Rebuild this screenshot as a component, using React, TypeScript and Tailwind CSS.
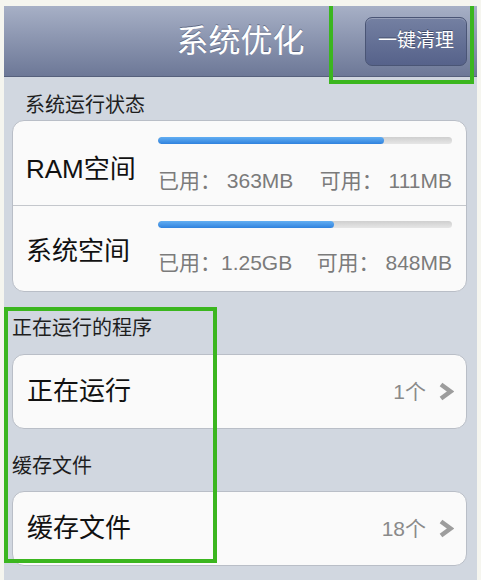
import type { ReactNode } from "react";

const font = "font-['Liberation_Sans','Noto_Sans_CJK_SC',sans-serif]";

function Bar({ pct }: { pct: number }) {
  return (
    <div className="h-[7px] w-full rounded-full bg-gradient-to-b from-[#cfcfcf] to-[#e6e6e6] overflow-hidden">
      <div
        className="h-full rounded-full bg-gradient-to-b from-[#62aef2] to-[#2f82de]"
        style={{ width: `${pct}%` }}
      />
    </div>
  );
}

function StatRow({
  label,
  pct,
  used,
  free,
  pad,
  gap,
  shift,
}: {
  label: string;
  pct: number;
  used: string;
  free: string;
  pad: string;
  gap: string;
  shift: string;
}) {
  return (
    <div className="flex items-center">
      <div className={`w-[145px] shrink-0 pl-[13px] text-[26px] leading-[30px] text-[#111] ${shift}`}>
        {label}
      </div>
      <div className={`flex-1 pr-[14px] ${pad}`}>
        <Bar pct={pct} />
        <div className={`flex justify-between text-[21px] leading-[22px] text-[#7b7b7b] ${gap}`}>
          <span>{used}</span>
          <span>{free}</span>
        </div>
      </div>
    </div>
  );
}

function SectionLabel({ children, cls }: { children: ReactNode; cls: string }) {
  return <div className={`text-[20px] leading-[20px] text-[#1e1e1e] ${cls}`}>{children}</div>;
}

function LinkCard({ label, count }: { label: string; count: string }) {
  return (
    <div className="ml-[8px] mr-[10px] h-[75px] flex items-center rounded-[12px] border border-[#b9bec7] bg-[#fafafa] pl-[14px] pr-[12px]">
      <span className="flex-1 text-[26px] text-[#111]">{label}</span>
      <span className="text-[21px] text-[#8a8a8a]">{count}</span>
      <svg className="ml-[12px]" width="16" height="19" viewBox="0 0 16 19">
        <polyline
          points="3,2.5 12.5,9.5 3,16.5"
          fill="none"
          stroke="#9d9d9d"
          strokeWidth="4.5"
          strokeLinejoin="miter"
        />
      </svg>
    </div>
  );
}

export default function App() {
  return (
    <div className={`w-[481px] h-[580px] bg-[#f5f5ef] pt-[6px] px-[4px] overflow-hidden ${font}`}>
      <div className="relative flex h-[574px] flex-col bg-[#d1d7e0]">
        <header className="grid h-[71px] grid-cols-[1fr_auto_1fr] items-center border-b border-[#56607c] bg-gradient-to-b from-[#a7b0c6] to-[#6d7897]">
          <div />
          <h1 className="text-[32px] leading-none text-white [text-shadow:0_-1px_0_rgba(60,70,95,0.6)]">
            系统优化
          </h1>
          <div className="flex justify-end pr-[10px]">
            <button className="h-[49px] w-[102px] rounded-[7px] border border-[#4a5575] bg-gradient-to-b from-[#7480a2] to-[#56628a] text-[19px] text-white shadow-[inset_0_1px_0_rgba(255,255,255,0.25)] [text-shadow:0_-1px_0_rgba(40,50,75,0.6)]">
              一键清理
            </button>
          </div>
        </header>

        <SectionLabel cls="pl-[21px] pt-[18px] pb-[5px]">系统运行状态</SectionLabel>

        <div className="ml-[8px] mr-[10px] rounded-[12px] border border-[#b9bec7] bg-[#fafafa]">
          <StatRow
            label="RAM空间"
            pct={77}
            used="已用： 363MB"
            free="可用： 111MB"
            pad="pt-[16px] pb-[13px]"
            gap="mt-[26px]"
            shift="pt-[12px]"
          />
          <div className="h-px bg-[#c4c7cc]" />
          <StatRow
            label="系统空间"
            pct={60}
            used="已用：1.25GB"
            free="可用： 848MB"
            pad="pt-[15px] pb-[17px]"
            gap="mt-[24px]"
            shift="pt-[4px]"
          />
        </div>

        <SectionLabel cls="pl-[8px] pt-[26px] pb-[16px]">正在运行的程序</SectionLabel>
        <LinkCard label="正在运行" count="1个" />

        <SectionLabel cls="pl-[8px] pt-[27px] pb-[15px]">缓存文件</SectionLabel>
        <LinkCard label="缓存文件" count="18个" />

        <div className="pointer-events-none absolute left-[325px] top-0 h-[78px] w-[145px] border-x-4 border-b-4 border-[#3bb61f]" />
        <div className="pointer-events-none absolute left-0 top-[301px] h-[256px] w-[213px] border-4 border-[#3bb61f]" />
      </div>
    </div>
  );
}
